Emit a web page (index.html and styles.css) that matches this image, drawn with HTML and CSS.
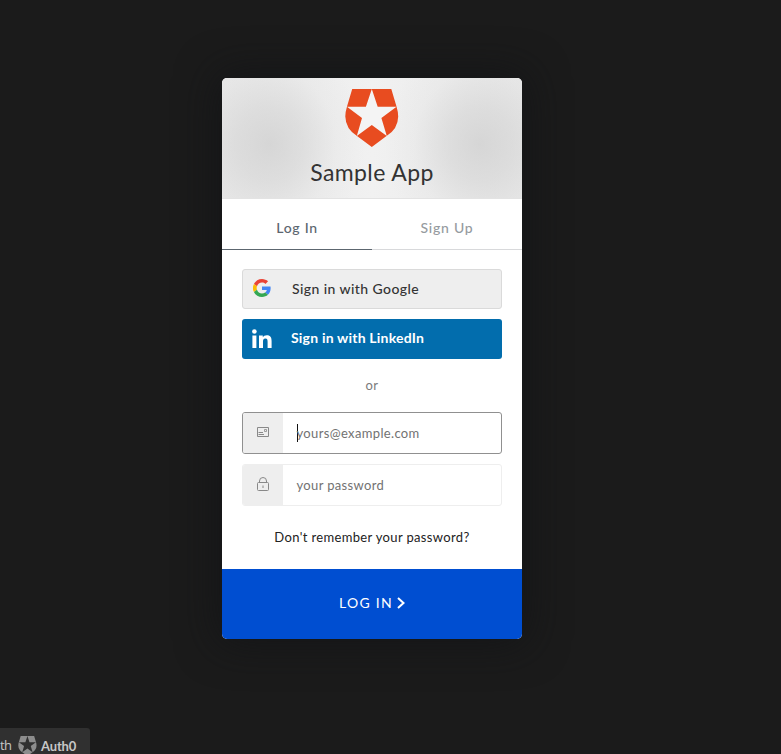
FILE: index.html
```html
<!DOCTYPE html>
<html lang="en">
<head>
<meta charset="utf-8">
<title>Sample App</title>
<link rel="stylesheet" href="styles.css">
</head>
<body>
<main class="card">
  <header class="header">
    <svg class="logo" viewBox="0 0 54 58"><path fill="#e84c20" d="M7.2 0H46.3L51.5 17.5Q53.2 23 53.2 27.5Q53 40 41.5 47L26.8 58L12 47Q.7 40 .3 27.5Q.3 23 2 17.500Z"/><path fill="#f4f4f4" d="M26.8 0L32.7 17.8H51.5L36.4 29L41.8 47L26.8 36L11.8 47L17 29L2 17.8H20.9Z"/></svg>
    <h1 class="title"><span>Sample App</span></h1>
  </header>
  <nav class="tabs">
    <a class="tab tab-active"><span>Log In</span></a>
    <a class="tab"><span>Sign Up</span></a>
  </nav>
  <section class="content">
    <button class="social google">
      <svg class="google-icon" viewBox="0 0 48 48"><path fill="#ea4335" d="M24 9.5c3.5 0 6.700 1.200 9.200 3.600l6.900-6.900C35.900 2.400 30.500 0 24 0 14.600 0 6.500 5.400 2.600 13.200l8 6.200C12.400 13.700 17.700 9.500 24 9.500z"/><path fill="#4285f4" d="M47 24.600c0-1.600-.2-3.100-.4-4.600H24v9h12.900c-.6 3-2.300 5.500-4.800 7.200l7.700 6c4.500-4.200 7.200-10.400 7.200-17.600z"/><path fill="#fbbc05" d="M10.500 28.600a14.500 14.500 0 0 1 0-9.200l-8-6.200a24 24 0 0 0 0 21.600z"/><path fill="#34a853" d="M24 48c6.500 0 11.900-2.100 15.900-5.800l-7.700-6c-2.200 1.500-4.900 2.300-8.200 2.300-6.300 0-11.600-4.200-13.500-9.900l-8 6.200C6.500 42.600 14.600 48 24 48z"/></svg>
      <span>Sign in with Google</span>
    </button>
    <button class="social linkedin">
      <svg class="linkedin-icon" viewBox="0 0 20 20"><path fill="#fff" d="M.4 6.500H4.400V19H.4ZM7 6.500H10.800V8.200C11.500 7 12.900 6.200 14.800 6.200C18.700 6.200 19.600 8.600 19.600 12.100V19H15.600V12.900C15.600 11.200 15.500 9.500 13.400 9.500C11.300 9.500 11 11.100 11 12.800V19H7Z"/><circle cx="2.400" cy="2.500" r="2.300" fill="#fff"/></svg>
      <span>Sign in with LinkedIn</span>
    </button>
    <p class="or"><span>or</span></p>
    <div class="field focused">
      <i class="field-icon"><svg width="12" height="10" viewBox="0 0 12 10" fill="none" stroke="#898989"><path d="M.5.5H11.500V9.500H.5ZM1.500 5.500H6M1.500 7.500H7"/><path d="M7.500 2.500H9.500V4.500H7.500Z" stroke-width=".8"/></svg></i>
      <span class="value email">yours@example.com</span>
    </div>
    <div class="field">
      <i class="field-icon"><svg width="12" height="14" viewBox="0 0 12 14" fill="none" stroke="#888"><rect x=".5" y="5.500" width="11" height="8" rx="1"/><path d="M2.500 5.500V4Q2.500.5 6 .5T9.500 4V5.500M6 8.500V11"/></svg></i>
      <span class="value password">your password</span>
    </div>
    <a class="forgot"><span>Don't remember your password?</span></a>
  </section>
  <button class="submit"><span>LOG IN</span><svg width="8" height="12" viewBox="0 0 8 12"><path d="M1 1L6.500 6L1 11" fill="none" stroke="#fff" stroke-width="2"/></svg></button>
</main>
<footer class="badge">
  <span class="badge-with">th</span>
  <svg class="badge-logo" viewBox="0 0 54 58"><path fill="#8d8d8d" d="M7.200 0H46.300L51.500 17.500Q53.200 23 53.200 27.500Q53 40 41.500 47L26.800 58L12 47Q.7 40 .3 27.500Q.3 23 2 17.500Z"/><path fill="#303030" d="M26.800 0L32.700 17.800H51.500L36.400 29L41.800 47L26.800 36L11.800 47L17 29L2 17.800H20.900Z"/></svg>
  <span class="badge-name">Auth0</span>
</footer>
</body>
</html>
```
FILE: styles.css
```css
* { box-sizing: border-box; }
body {
  margin: 0;
  height: 754px;
  padding: 78px 0 0 222px;
  overflow: hidden;
  background: #1b1b1b;
  font-family: Lato, sans-serif;
}
button { border: 0; font: inherit; }
.card {
  width: 300px;
  height: 561px;
  overflow: hidden;
  border-radius: 5px;
  background: #fff;
  box-shadow: 0 0 40px 4px rgba(17, 18, 22, .7);
}
.header {
  height: 121px;
  padding-top: 11px;
  text-align: center;
  border-bottom: 1px solid #e3e3e3;
  background:
    radial-gradient(ellipse 95px 105px at 48px 66px, rgba(205, 205, 205, .7), rgba(208, 208, 208, .5) 35%, rgba(220, 220, 220, .2) 70%, transparent),
    radial-gradient(ellipse 95px 105px at 258px 66px, rgba(205, 205, 205, .7), rgba(208, 208, 208, .5) 35%, rgba(220, 220, 220, .2) 70%, transparent),
    linear-gradient(90deg, #e8e8e8, #f1f1f1 50%, #e8e8e8);
}
.logo { display: block; width: 54px; height: 58px; margin: 0 auto; }
.title {
  margin: 10px 0 0;
  font-size: 23px;
  line-height: 30px;
  font-weight: 400;
  letter-spacing: .4px;
  color: #333;
}
.tabs { display: flex; height: 51px; }
.tab {
  flex: 1;
  padding-top: 19px;
  text-align: center;
  font-size: 14px;
  line-height: 20px;
  font-weight: 500;
  letter-spacing: .75px;
  color: #969ba0;
  border-bottom: 1px solid #d8d9db;
}
.tab-active { color: #5c666f; border-color: #5c666f; }
.content { height: 319px; padding: 19px 20px 0; }
.social {
  display: flex;
  align-items: center;
  width: 260px;
  height: 40px;
  margin-bottom: 10px;
  border-radius: 3px;
  font-size: 14px;
  font-weight: 500;
}
.google { padding: 0 0 2px 10px; border: 1px solid #dadada; background: #eee; color: #333; letter-spacing: .42px; }
.google-icon { width: 18px; height: 18px; margin: 0 21px 0 0; }
.linkedin { padding: 0 0 3px 10px; background: #026dad; color: #fff; font-weight: 700; letter-spacing: .2px; }
.linkedin-icon { width: 20px; height: 20px; margin: 3px 19px 0 0; }
.or {
  margin: 16px 0 17px;
  text-align: center;
  font-size: 13px;
  line-height: 20px;
  letter-spacing: .5px;
  color: #7b7b7b;
}
.field {
  display: flex;
  height: 42px;
  margin-bottom: 10px;
  overflow: hidden;
  border: 1px solid #eee;
  border-radius: 3px;
}
.focused { border-color: #909090; }
.field-icon { display: flex; width: 40px; align-items: center; justify-content: center; padding-bottom: 2px; background: #eee; }
.value {
  margin: 10px 0 0 14px;
  height: 20px;
  font-size: 13px;
  line-height: 20px;
  letter-spacing: .35px;
  text-indent: -.5px;
  color: #727272;
}
.focused .value {
  height: 19px;
  background: linear-gradient(#111, #111) 0 100% / 1px 18px no-repeat;
}
.forgot { display: block; margin-top: 21px; text-align: center; font-size: 13px; line-height: 20px; letter-spacing: .35px; color: #222; }
.submit {
  display: flex;
  width: 300px;
  height: 70px;
  padding: 0 0 3px;
  align-items: center;
  justify-content: center;
  gap: 4px;
  background: #004ed1;
  color: #fff;
  font-size: 14px;
  letter-spacing: 1.3px;
}
.submit svg { margin-top: 1px; }
.badge {
  position: absolute;
  left: 0;
  bottom: 0;
  display: flex;
  width: 90px;
  height: 26px;
  padding-top: 8px;
  overflow: hidden;
  border-radius: 0 3px 0 0;
  background: #303030;
  color: #c7c7c7;
  font-family: "Open Sans", sans-serif;
  font-size: 13px;
  line-height: 20px;
}
.badge-with { width: 18px; letter-spacing: -.6px; line-height: 18px; }
.badge-logo { flex: none; width: 19px; height: 20px; }
.badge-name { margin-left: 4px; font-family: Lato, sans-serif; font-weight: 700; letter-spacing: -.15px; }
```
